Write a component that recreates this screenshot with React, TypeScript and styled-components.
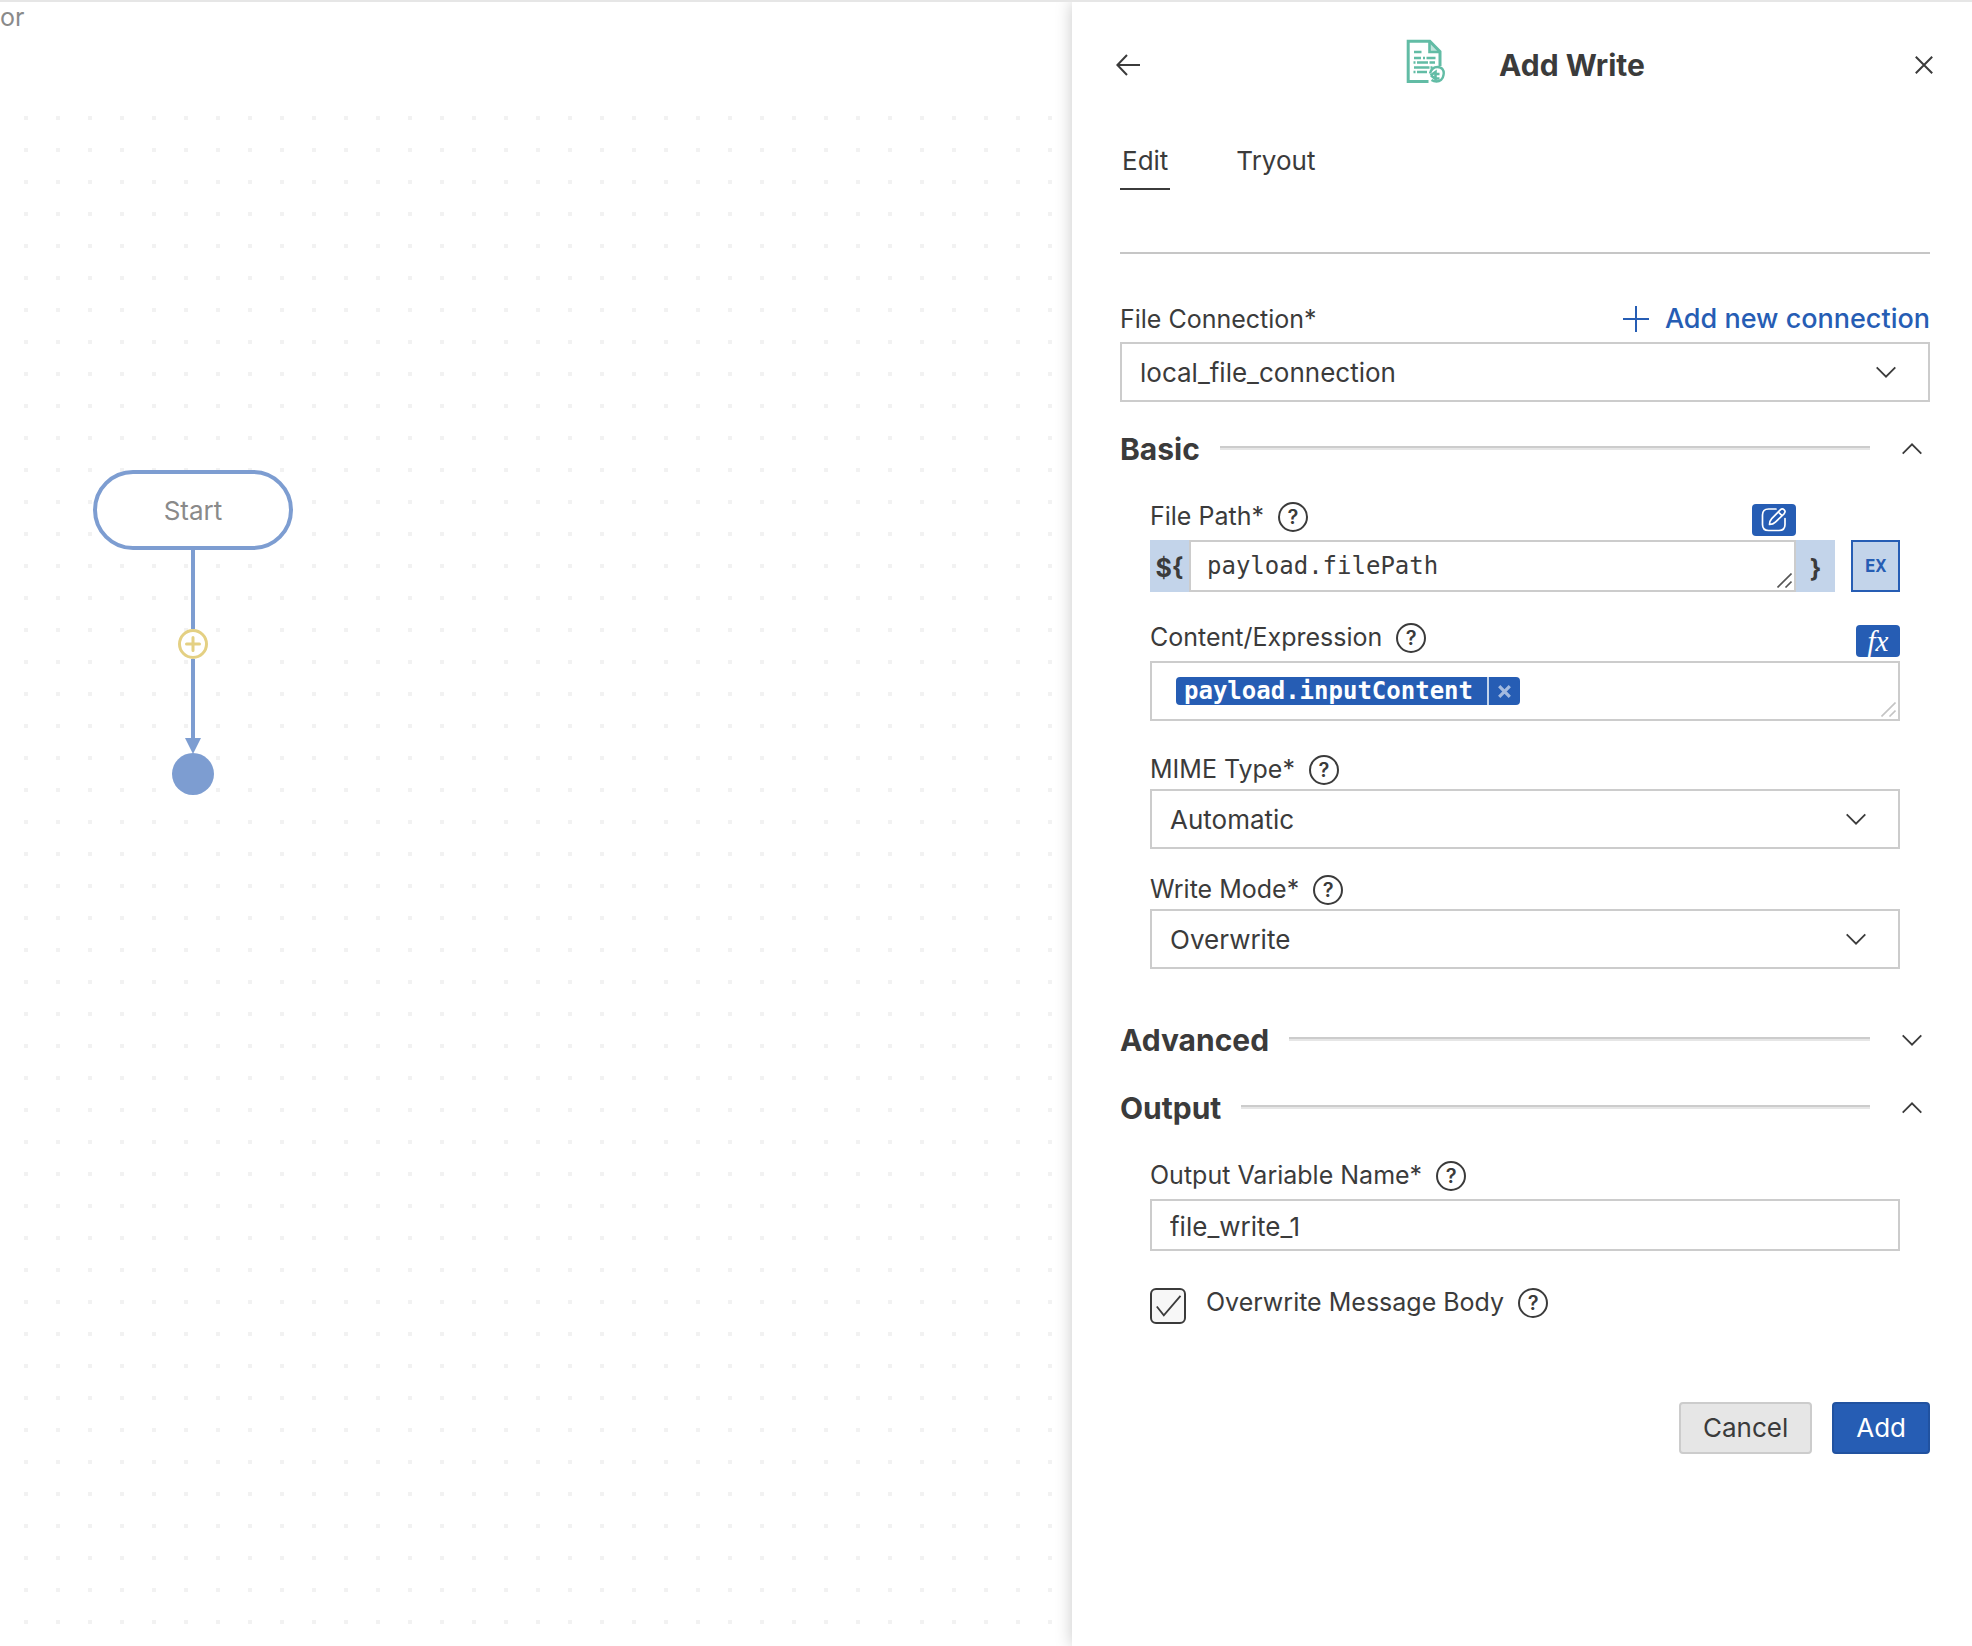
import React, { useState } from "react";
import styled, { createGlobalStyle, css } from "styled-components";

const color = {
  text: "#3b3b3b",
  muted: "#8a8a8a",
  line: "#cccccc",
  topLine: "#e6e6e6",
  blue: "#265db4",
  blueDark: "#2152a0",
  paleBlue: "#c3d4ea",
  node: "#7d9dd1",
  gold: "#e4d083",
  green: "#62bca5",
};

const sans = `Inter, "Liberation Sans", sans-serif`;
const mono = `"DejaVu Sans Mono", "Liberation Mono", monospace`;

const GlobalStyle = createGlobalStyle`
  *, *::before, *::after { box-sizing: border-box; }
  body { margin: 0; background: #fff; color: ${color.text}; font: 400 25px/32px ${sans}; }
  button, input, select, textarea { font: inherit; color: inherit; margin: 0; }
  button { padding: 0; border: 0; background: none; cursor: pointer; }
  svg { display: block; flex: none; }
`;

const Page = styled.div`
  display: flex;
  min-height: 100vh;
  border-top: 2px solid ${color.topLine};
`;

/* ---------- diagram ---------- */

const Diagram = styled.main`
  flex: 1;
  min-width: 0;
  display: flex;
  flex-direction: column;
  overflow: hidden;
`;

const Crumb = styled.div`
  height: 90px;
  color: ${color.muted};
  line-height: 30px;
`;

const Canvas = styled.div`
  position: relative;
  flex: 1;
  background: conic-gradient(at 4px 4px, transparent 75%, #f2f2f2 0) 24px 24px / 32px 32px;
`;

const Flow = styled.div`
  position: absolute;
  left: 93px;
  top: 378px;
  width: 200px;
  display: flex;
  flex-direction: column;
  align-items: center;
`;

const StartNode = styled.div`
  width: 100%;
  height: 80px;
  display: grid;
  place-items: center;
  padding-top: 2px;
  border: 4px solid ${color.node};
  border-radius: 40px;
  background: #fff;
  color: ${color.muted};
  font-size: 26px;
`;

const Edge = styled.div`
  width: 4px;
  height: 79px;
  background: ${color.node};
`;

const AddStep = styled.button`
  width: 30px;
  height: 30px;
  border-radius: 50%;
  background: #fff;
`;

const EndNode = styled.div`
  width: 42px;
  height: 42px;
  margin-top: -1px;
  border-radius: 50%;
  background: ${color.node};
`;

/* ---------- panel ---------- */

const Panel = styled.aside`
  width: 900px;
  max-width: 100%;
  flex: none;
  padding: 38px 42px 48px 48px;
  background: #fff;
  box-shadow: 0 0 16px rgba(0, 0, 0, 0.22);
  clip-path: inset(0 0 0 -30px);
`;

const PanelHeader = styled.header`
  display: flex;
  align-items: center;
  justify-content: space-between;
  height: 50px;
  margin: 0 -3px 0 -4px;
`;

const TitleGroup = styled.div`
  display: flex;
  align-items: center;
  gap: 54px;
  height: 44px;
  margin-right: 4px;
  & > svg { align-self: flex-start; margin-top: -4px; }
`;

const Title = styled.h1`
  margin: 0;
  font-size: 30px;
  line-height: 36px;
  font-weight: 700;
`;

const Tabs = styled.nav`
  display: flex;
  gap: 64px;
  margin-top: 55px;
  padding-bottom: 62px;
  border-bottom: 2px solid #c6c6c6;
`;

const Tab = styled.button<{ $active?: boolean }>`
  padding: 0 2px 11px;
  border-bottom: 2px solid ${(p) => (p.$active ? color.text : "transparent")};
  font-size: 26px;
`;

const Form = styled.form`
  margin-top: 49px;
`;

const Field = styled.div<{ $gap?: number; $top?: number }>`
  display: flex;
  flex-direction: column;
  gap: ${(p) => p.$gap ?? 4}px;
  margin-top: ${(p) => p.$top ?? 0}px;
`;

const LabelRow = styled.div<{ $inset?: number }>`
  display: flex;
  align-items: flex-start;
  height: 36px;
  gap: 14px;
  padding-right: ${(p) => p.$inset ?? 0}px;
`;

const Spacer = styled.span`
  flex: 1;
`;

const HelpButton = styled.button`
  width: 30px;
  height: 30px;
  margin-top: 2px;
  border: 2px solid ${color.text};
  border-radius: 50%;
  font-size: 20px;
  line-height: 26px;
  font-weight: 600;
`;

const NewConnection = styled.button`
  display: flex;
  align-items: center;
  gap: 16px;
  color: ${color.blue};
  font-size: 27px;
  font-weight: 500;
`;

const control = css`
  width: 100%;
  border: 2px solid ${color.line};
  border-radius: 0;
  background: #fff;
  outline: none;
  font-size: 26px;
`;

const SelectWrap = styled.div`
  position: relative;
  & > svg {
    position: absolute;
    right: 34px;
    top: 24px;
    pointer-events: none;
  }
`;

const Select = styled.select`
  ${control}
  display: block;
  appearance: none;
  height: 60px;
  padding: 2px 64px 0 18px;
`;

const TextInput = styled.input`
  ${control}
  height: 52px;
  padding: 2px 18px 0;
`;

const SmallButton = styled.button`
  display: grid;
  place-items: center;
  width: 44px;
  height: 32px;
  align-self: flex-end;
  border-radius: 4px;
  background: ${color.blue};
  color: #fff;
`;

const FxText = styled.span`
  font: italic 400 29px/28px "Liberation Serif", "Times New Roman", serif;
`;

const ExpressionRow = styled.div`
  display: flex;
  height: 52px;
`;

const Brace = styled.span`
  display: grid;
  place-items: center;
  width: 39px;
  padding-top: 4px;
  background: ${color.paleBlue};
  font-size: 25px;
  font-weight: 700;
`;

const ExpressionBox = styled.div`
  position: relative;
  flex: 1;
`;

const Grip = styled.svg<{ $inset: number }>`
  position: absolute;
  right: ${(p) => p.$inset}px;
  bottom: ${(p) => p.$inset}px;
  pointer-events: none;
`;

const ExpressionInput = styled.textarea`
  ${control}
  display: block;
  height: 52px;
  padding: 8px 16px;
  resize: none;
  overflow: hidden;
  font-family: ${mono};
  font-size: 24px;
`;

const ExButton = styled.button`
  width: 49px;
  height: 52px;
  margin-left: 16px;
  border: 2px solid ${color.blue};
  background: ${color.paleBlue};
  color: ${color.blue};
  font: 700 18px/24px ${mono};
`;

const TokenBox = styled.div`
  ${control}
  position: relative;
  display: flex;
  align-items: center;
  height: 60px;
  padding: 0 24px;
`;

const Token = styled.span`
  display: flex;
  height: 28px;
  border-radius: 4px;
  overflow: hidden;
  background: ${color.blue};
  color: #fff;
  font: 700 24px/28px ${mono};
`;

const TokenText = styled.span`
  padding: 0 14px 0 8px;
`;

const TokenRemove = styled.button`
  display: grid;
  place-items: center;
  width: 33px;
  border-left: 2px solid ${color.paleBlue};
`;

const Section = styled.section<{ $top: number }>`
  margin-top: ${(p) => p.$top}px;
`;

const SectionHead = styled.div`
  display: flex;
  align-items: center;
  height: 36px;
  padding-right: 8px;
`;

const SectionTitle = styled.h2`
  margin: 0 20px 0 0;
  font-size: 30px;
  line-height: 36px;
  font-weight: 700;
`;

const Rule = styled.hr`
  flex: 1;
  height: 4px;
  margin: 0 32px 2px 0;
  border: 0;
  border-top: 2px solid ${color.line};
  border-bottom: 2px solid ${color.topLine};
`;

const SectionBody = styled.div`
  padding: 33px 30px 0;
`;

const CheckRow = styled.div`
  display: flex;
  align-items: flex-start;
  gap: 14px;
  margin-top: 35px;
`;

const CheckWrap = styled.span`
  position: relative;
  width: 36px;
  height: 36px;
  margin: 2px 6px 0 0;
  & > svg { position: absolute; left: 6px; top: 7px; pointer-events: none; }
`;

const Checkbox = styled.input`
  display: block;
  appearance: none;
  width: 36px;
  height: 36px;
  border: 2px solid ${color.text};
  border-radius: 6px;
  background: #f7f7f7;
`;

const Actions = styled.footer`
  display: flex;
  justify-content: flex-end;
  gap: 20px;
  margin-top: 78px;
`;

const ActionButton = styled.button<{ $primary?: boolean }>`
  height: 52px;
  padding: 0 22px;
  border: 2px solid ${(p) => (p.$primary ? color.blueDark : color.line)};
  border-radius: 4px;
  background: ${(p) => (p.$primary ? color.blue : color.topLine)};
  color: ${(p) => (p.$primary ? "#fff" : color.text)};
  font-size: 26px;
`;

/* ---------- icons ---------- */

const Chevron = ({ up }: { up?: boolean }) => (
  <svg width="20" height="12" viewBox="0 0 20 12" fill="none" stroke={color.text} strokeWidth="1.8">
    <path d={up ? "M.7 10.7 10 1.3l9.3 9.4" : "M.7 1.3 10 10.7l9.3-9.4"} />
  </svg>
);

const BackIcon = () => (
  <svg width="24" height="22" viewBox="0 0 24 22" fill="none" stroke={color.text} strokeWidth="2">
    <path d="M24 11H1.5M11 1 1.4 11 11 21" />
  </svg>
);

const CloseIcon = () => (
  <svg width="18" height="18" viewBox="0 0 18 18" fill="none" stroke={color.text} strokeWidth="2">
    <path d="m.8.8 16.4 16.4M17.2.8.8 17.2" />
  </svg>
);

const FileWriteIcon = () => (
  <svg width="39" height="45" viewBox="0 0 39 45" fill="none" stroke={color.green} strokeWidth="3">
    <path d="M22.5 42.500H2.200V2.200h21.600L34 12.600V27" />
    <path d="M23.500 2.500V13H34" strokeWidth="2.600" />
    <path d="M24 3l10 10h-10z" fill={color.green} fillOpacity=".4" stroke="none" />
    <path d="M8 13h7.500M8 19h7M17 19h2M20.500 19h9M7.500 23.500h2M11 23.500h11M23.500 23.500h5.500M8 28.500h15.500M24.500 28.500h2M7.500 33h2M11 33h10" strokeWidth="2.500" />
    <path d="M24 34.500c1-4.200 4-6.500 7.500-6.500 4.500 0 7 3.500 6 8-.5 4-3.500 6.500-7 6.500-2 0-3.500-.5-5-1.500" strokeWidth="2.400" />
    <path d="m24.500 36.500 5-3.500v2h4M29.500 39.500h4M25 36.500l4.500 3.500v-5" strokeWidth="2.600" />
  </svg>
);

const PlusIcon = () => (
  <svg width="26" height="26" viewBox="0 0 26 26" stroke={color.blue} strokeWidth="2">
    <path d="M13 0v26M0 13h26" />
  </svg>
);

const AddStepIcon = () => (
  <svg width="30" height="30" viewBox="0 0 30 30" fill="none" stroke={color.gold} strokeWidth="3">
    <circle cx="15" cy="15" r="13.500" />
    <path d="M15 8.500v13M8.500 15h13" strokeLinecap="round" />
  </svg>
);

const ArrowHead = () => (
  <svg width="16" height="16" viewBox="0 0 16 16" fill={color.node}>
    <path d="M0 0h16L8 16z" />
  </svg>
);

const EditIcon = () => (
  <svg width="26" height="26" viewBox="0 0 26 26" fill="none" stroke="#fff" strokeWidth="1.700" strokeLinecap="round" strokeLinejoin="round">
    <path d="M15 2H7.500C3.500 2 1.500 4 1.500 8v9.500c0 4 2 6 6 6h10.500c4 0 6-2 6-6V11.500" />
    <path d="M8.500 17.500c0-2.500.8-4.300 2.200-5.800l8.600-8.800c1.300-1.300 2.800-1.100 3.900-.1 1.200 1.200 1 2.700-.2 4l-8.600 8.400c-1.500 1.500-3.400 2.300-5.900 2.300zM17.300 5l3.800 3.700" />
  </svg>
);

const RemoveIcon = () => (
  <svg width="13" height="13" viewBox="0 0 13 13" fill="none" stroke="#a3badf" strokeWidth="3.200">
    <path d="m1.200 1.200 10.600 10.600M11.800 1.200 1.200 11.800" />
  </svg>
);

const CheckIcon = () => (
  <svg width="26" height="22" viewBox="0 0 26 22" fill="none" stroke={color.text} strokeWidth="1.800">
    <path d="m.8 11.500 7 8.800L24.500.8" />
  </svg>
);

const ResizeGrip = ({ stroke, inset }: { stroke: string; inset: number }) => (
  <Grip $inset={inset} width="15" height="15" viewBox="0 0 15 15" fill="none" stroke={stroke} strokeWidth="1.600">
    <path d="M.5 14.500 14.500.5M8.500 14.500l6-6" />
  </Grip>
);

/* ---------- parts ---------- */

const Help = ({ about }: { about: string }) => (
  <HelpButton type="button" aria-label={`Help for ${about}`}>?</HelpButton>
);

function SelectField({ id, options }: { id: string; options: string[] }) {
  return (
    <SelectWrap>
      <Select id={id} defaultValue={options[0]}>
        {options.map((o) => (
          <option key={o}>{o}</option>
        ))}
      </Select>
      <Chevron />
    </SelectWrap>
  );
}

function FormSection(props: { title: string; top: number; initiallyOpen?: boolean; children?: React.ReactNode }) {
  const [open, setOpen] = useState(!!props.initiallyOpen);
  return (
    <Section $top={props.top}>
      <SectionHead>
        <SectionTitle>{props.title}</SectionTitle>
        <Rule />
        <button type="button" aria-label={`Toggle ${props.title}`} aria-expanded={open} onClick={() => setOpen(!open)}>
          <Chevron up={open} />
        </button>
      </SectionHead>
      {open && props.children && <SectionBody>{props.children}</SectionBody>}
    </Section>
  );
}

export default function App() {
  return (
    <>
      <GlobalStyle />
      <Page>
        <Diagram>
          <Crumb>or</Crumb>
          <Canvas>
            <Flow>
              <StartNode>Start</StartNode>
              <Edge />
              <AddStep type="button" aria-label="Add step"><AddStepIcon /></AddStep>
              <Edge />
              <ArrowHead />
              <EndNode />
            </Flow>
          </Canvas>
        </Diagram>

        <Panel>
          <PanelHeader>
            <button type="button" aria-label="Back"><BackIcon /></button>
            <TitleGroup>
              <FileWriteIcon />
              <Title>Add Write</Title>
            </TitleGroup>
            <button type="button" aria-label="Close"><CloseIcon /></button>
          </PanelHeader>

          <Tabs>
            <Tab type="button" $active>Edit</Tab>
            <Tab type="button">Tryout</Tab>
          </Tabs>

          <Form onSubmit={(e) => e.preventDefault()}>
            <Field $gap={3}>
              <LabelRow>
                <label htmlFor="connection">File Connection*</label>
                <Spacer />
                <NewConnection type="button"><PlusIcon />Add new connection</NewConnection>
              </LabelRow>
              <SelectField id="connection" options={["local_file_connection"]} />
            </Field>

            <FormSection title="Basic" top={29} initiallyOpen>
              <Field>
                <LabelRow $inset={104}>
                  <label htmlFor="path">File Path*</label>
                  <Help about="File Path" />
                  <Spacer />
                  <SmallButton type="button" aria-label="Edit expression"><EditIcon /></SmallButton>
                </LabelRow>
                <ExpressionRow>
                  <Brace>{"${"}</Brace>
                  <ExpressionBox>
                    <ExpressionInput id="path" rows={1} defaultValue="payload.filePath" spellCheck={false} />
                    <ResizeGrip stroke="#555" inset={4} />
                  </ExpressionBox>
                  <Brace>{"}"}</Brace>
                  <ExButton type="button">EX</ExButton>
                </ExpressionRow>
              </Field>

              <Field $top={29}>
                <LabelRow>
                  <span id="content-label">Content/Expression</span>
                  <Help about="Content/Expression" />
                  <Spacer />
                  <SmallButton type="button"><FxText>fx</FxText></SmallButton>
                </LabelRow>
                <TokenBox role="group" aria-labelledby="content-label">
                  <Token>
                    <TokenText>payload.inputContent</TokenText>
                    <TokenRemove type="button" aria-label="Remove"><RemoveIcon /></TokenRemove>
                  </Token>
                  <ResizeGrip stroke="#c4c4c4" inset={2} />
                </TokenBox>
              </Field>

              <Field $top={32} $gap={0}>
                <LabelRow>
                  <label htmlFor="mime">MIME Type*</label>
                  <Help about="MIME Type" />
                </LabelRow>
                <SelectField id="mime" options={["Automatic"]} />
              </Field>

              <Field $top={24} $gap={0}>
                <LabelRow>
                  <label htmlFor="mode">Write Mode*</label>
                  <Help about="Write Mode" />
                </LabelRow>
                <SelectField id="mode" options={["Overwrite"]} />
              </Field>
            </FormSection>

            <FormSection title="Advanced" top={53} />

            <FormSection title="Output" top={32} initiallyOpen>
              <Field>
                <LabelRow>
                  <label htmlFor="output">Output Variable Name*</label>
                  <Help about="Output Variable Name" />
                </LabelRow>
                <TextInput id="output" type="text" defaultValue="file_write_1" />
              </Field>
              <CheckRow>
                <CheckWrap>
                  <Checkbox id="overwrite-body" type="checkbox" defaultChecked />
                  <CheckIcon />
                </CheckWrap>
                <label htmlFor="overwrite-body">Overwrite Message Body</label>
                <Help about="Overwrite Message Body" />
              </CheckRow>
            </FormSection>

            <Actions>
              <ActionButton type="button">Cancel</ActionButton>
              <ActionButton type="submit" $primary>Add</ActionButton>
            </Actions>
          </Form>
        </Panel>
      </Page>
    </>
  );
}
